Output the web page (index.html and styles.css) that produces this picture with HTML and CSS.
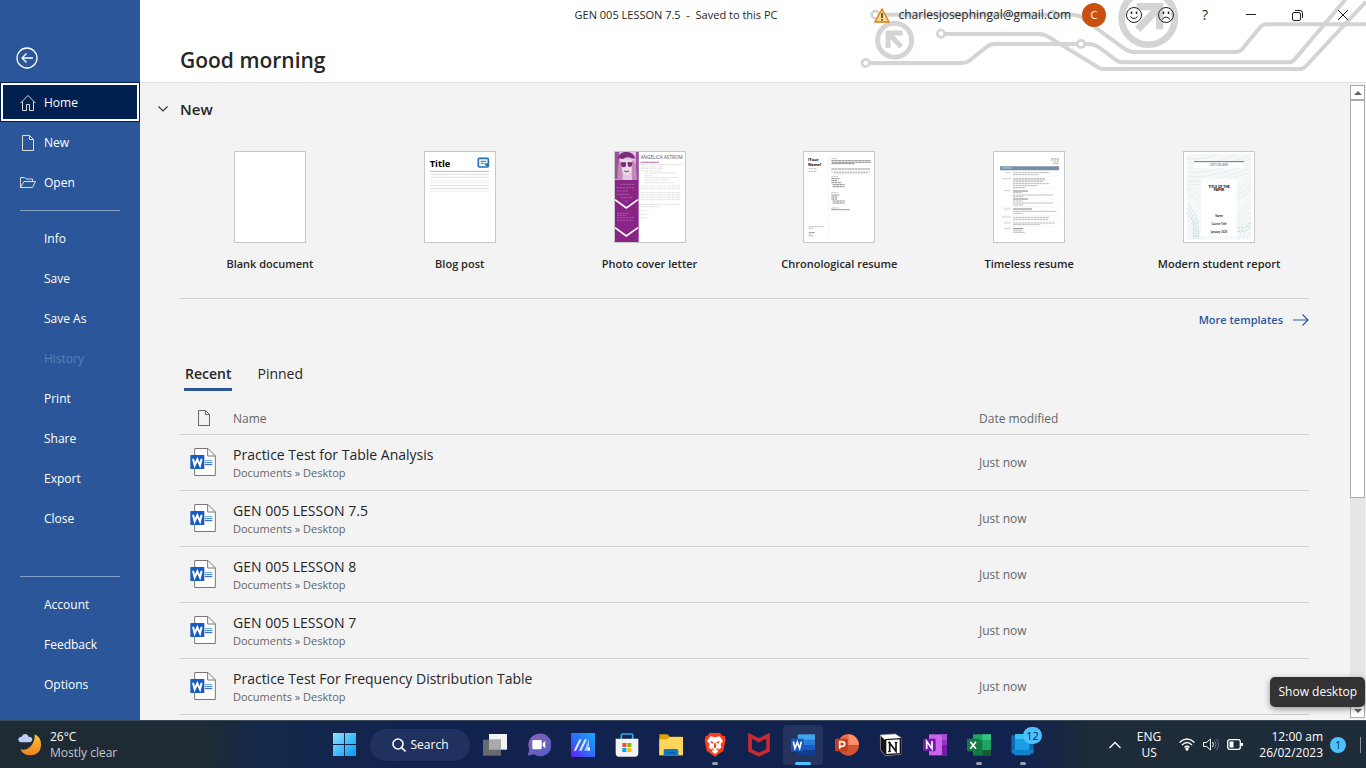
FILE: index.html
```html
<!DOCTYPE html>
<html lang="en">
<head>
<meta charset="utf-8">
<title>GEN 005 LESSON 7.5 - Word</title>
<link rel="stylesheet" href="styles.css">
</head>
<body>
<svg class="defs" aria-hidden="true">
  <symbol id="page" viewBox="0 0 14 18"><path d="M1.5 1.5h7l4 4v11h-11zM8.500 1.500v4h4" fill="none" stroke="currentColor"/></symbol>
  <symbol id="wordfile" viewBox="0 0 78 84">
    <path d="M14 1.500h40l22 22v59H14z" fill="#fff" stroke="#777" stroke-width="3"/>
    <path d="M53 2v22h23" fill="none" stroke="#777" stroke-width="3"/>
    <path d="M45 38h22" stroke="#41a5ee" stroke-width="3"/><path d="M45 44h22" stroke="#2b7cd3" stroke-width="3"/><path d="M45 50h22" stroke="#185abd" stroke-width="3"/>
    <rect x="1" y="21" width="42" height="42" rx="2" fill="#185abd"/>
    <path d="M9 32l5 20 8-18 8 18 5-20" fill="none" stroke="#fff" stroke-width="6"/>
  </symbol>
</svg>
<div class="app">
  <aside class="side">
    <button class="back" aria-label="Back"><svg width="22" height="22" viewBox="0 0 22 22" fill="none" stroke="#fff" stroke-width="1.300"><circle cx="11" cy="11" r="10"/><path d="M17 11H6M10.500 6.500L6 11l4.500 4.500"/></svg></button>
    <nav class="menu">
      <a href="#" class="item active"><svg width="16" height="18" viewBox="0 0 16 18" fill="none" stroke="#ddd"><path d="M.5 9L8 1.500 15.500 9M2.500 7.500v9h4v-6h3v6h4v-9"/></svg>Home</a>
      <a href="#" class="item"><svg width="16" height="18"><use href="#page"/></svg>New</a>
      <a href="#" class="item"><svg width="16" height="18" viewBox="0 0 16 18" fill="none" stroke="#ddd"><path d="M.5 13.500v-10h4l2 1.500h6v2.500M.5 13.500l3.500-6h11.500l-3 6z"/></svg>Open</a>
      <hr>
      <a href="#" class="item">Info</a>
      <a href="#" class="item">Save</a>
      <a href="#" class="item">Save As</a>
      <a href="#" class="item disabled" aria-disabled="true">History</a>
      <a href="#" class="item">Print</a>
      <a href="#" class="item">Share</a>
      <a href="#" class="item">Export</a>
      <a href="#" class="item">Close</a>
    </nav>
    <nav class="menu bottom">
      <hr>
      <a href="#" class="item">Account</a>
      <a href="#" class="item">Feedback</a>
      <a href="#" class="item">Options</a>
    </nav>
  </aside>
  <div class="main">
    <header class="head">
      <svg class="circuit" width="516" height="82" viewBox="0 0 1548 246" fill="none" stroke="#d4d4d4" stroke-width="12" aria-hidden="true">
        <circle cx="76" cy="44" r="11" stroke-width="8"/><path d="M88 44H596"/><circle cx="608" cy="44" r="11" stroke-width="8"/><path d="M620 44H670Q690 45 706 60L825 147Q838 156 850 156H1160Q1168 156 1176 148L1230 82Q1238 73 1250 73H1548"/>
        <circle cx="273" cy="101" r="11" stroke-width="8"/><path d="M285 102H568Q582 102 598 112L735 196Q750 207 760 207H1350Q1360 207 1368 198L1548 5"/>
        <circle cx="47" cy="189" r="11" stroke-width="8"/><path d="M59 189H338Q350 189 361 180L407 143Q420 132 434 132H681"/><circle cx="693" cy="132" r="11" stroke-width="8"/><path d="M705 132H720Q735 133 750 144L796 179Q806 187 818 187H1316Q1326 187 1334 178L1490 -6"/>
        <circle cx="134" cy="121" r="51" stroke-width="15"/><path d="M114 144V99H158M116 101L154 140" stroke-width="15"/>
        <circle cx="895" cy="54" r="80" stroke-width="20"/><path d="M860 20H929V88M927 22L863 88" stroke-width="22"/>
      </svg>
      <div class="titlebar">
        <span class="doc">GEN 005 LESSON 7.5&nbsp; -&nbsp; Saved to this PC</span>
        <svg width="16" height="15" viewBox="0 0 16 15"><path d="M8 1l7 13H1z" fill="#fbdc8d" stroke="#e07b16" stroke-width="1.300"/><path d="M8 5v5M8 11v1.500" stroke="#333" stroke-width="1.500"/></svg>
        <button class="mail">charlesjosephingal@gmail.com</button>
        <button class="avatar" aria-label="Account">C</button>
        <button class="face" aria-label="Send a smile"><svg width="16" height="16" viewBox="0 0 16 16" fill="none" stroke="#222"><circle cx="8" cy="8" r="7.500"/><path d="M4.500 9.500q3.500 4 7 0"/><path d="M5.500 4.500v2.500M10.500 4.500v2.500" stroke-width="1.500"/></svg></button>
        <button class="face" aria-label="Send a frown"><svg width="16" height="16" viewBox="0 0 16 16" fill="none" stroke="#222"><circle cx="8" cy="8" r="7.500"/><path d="M4 12.500q4-5 8 0"/><path d="M5.500 4.500v2.500M10.500 4.500v2.500" stroke-width="1.500"/></svg></button>
        <button class="win" aria-label="Help">?</button>
        <button class="win" aria-label="Minimize"><svg width="10" height="10"><path d="M0 4.500h10" stroke="#222"/></svg></button>
        <button class="win" aria-label="Restore"><svg width="11" height="11" viewBox="0 0 11 11" fill="none" stroke="#222"><rect x=".5" y="2.500" width="8" height="8" rx="1.500"/><path d="M3 .5h5q2.500 0 2.500 2.500v5"/></svg></button>
        <button class="win" aria-label="Close"><svg width="10" height="10" viewBox="0 0 10 10"><path d="M0 0l10 10M10 0L0 10" stroke="#222"/></svg></button>
      </div>
      <h1>Good morning</h1>
    </header>
    <div class="body">
      <main class="content">
        <h2><button class="fold" aria-label="Collapse New"><svg width="10" height="6" viewBox="0 0 10 6" fill="none" stroke="#333" stroke-width="1.200"><path d="M.5.5L5 5 9.500.5"/></svg></button>New</h2>
        <div class="templates">
          <button class="tpl"><span class="thumb"></span>Blank document</button>
          <button class="tpl"><span class="thumb"><svg viewBox="0 0 210 270"><text x="14" y="46" class="t-title">Title</text><rect x="160" y="19" width="30" height="26" rx="3" fill="#fff" stroke="#2372ba" stroke-width="5"/><path d="M167 28h16M167 34h9" stroke="#2372ba" stroke-width="3"/><path d="M177 34h13v8h-7z" fill="#2372ba"/><path d="M15 58h177" stroke="#bbb" stroke-width="3"/><path d="M15 67h177M15 76h177M15 101h177M15 110h177" stroke="#dedede" stroke-width="3"/><path d="M15 86h177M15 92h177M15 118h177" stroke="#eee" stroke-width="3"/></svg></span>Blog post</button>
          <button class="tpl"><span class="thumb"><svg viewBox="0 0 210 270"><path fill="#8a2487" d="M0 0h71v270H0z"/><path fill="#e3c9df" d="M0 0h71v84H0z"/><path fill="#9b519b" d="M0 0h13v22l-5 60H0zM63 0h8v84H60z"/><path fill="#c28abb" d="M12 28q-6 28-4 56h15V35zM49 30l2 54h15Q64 47 56 24z"/><path fill="#eadae8" d="M20 24h30v29q-5 17-15 17T21 54z"/><path fill="#792d7b" d="M8 18Q16-3 37 0q18 0 24 20l-11-1q-14-8-26 2zM17 31h16v11q-7 8-14 0zM37 31h16l-3 11q-6 6-11 0z"/><path d="M28 57q7 5 14 0" stroke="#792d7b" stroke-width="3" fill="none"/><path fill="none" stroke="#fff" stroke-width="5" d="M0 143l34 25 35-25M0 227l34 25 35-25"/><path stroke="#b67bb4" stroke-width="2" stroke-dasharray="7 2" d="M15 97h43M4 107h52M5 117h34M5 127h40M17 137h38M6 184h35M6 190h28M6 197h50M6 205h47M30 147h8"/><text x="77" y="22" class="t-name">ANGELICA ASTROM</text><path d="M77 31h55" stroke="#b86fb4" stroke-width="4" stroke-dasharray="5 1"/><path stroke="#d2d2d2" stroke-width="2" stroke-dasharray="14 2 8 2" d="M77 38h126M77 45h65M77 50h70M77 57h62M89 63h97M89 71h22M89 77h101M89 84h74M89 92h88M77 102h118M77 109h118M77 122h123M77 129h118M77 136h121M77 143h119M77 157h117M77 164h56M77 176h20M77 187h26M77 197h20"/></svg></span>Photo cover letter</button>
          <button class="tpl"><span class="thumb"><svg viewBox="0 0 210 270"><text x="12" y="28" class="t-your">[Your</text><text x="12" y="41" class="t-your">Name]</text><path d="M74 12v245" stroke="#eee" stroke-width="2"/><path stroke="#999" stroke-width="2" stroke-dasharray="6 2" d="M14 50h25M14 58h25M82 20h18M82 60h116M90 63h100M82 74h20M82 122h20M14 224h49M14 229h15M14 248h10M14 252h17M82 168h22"/><path stroke="#555" stroke-width="2" stroke-dasharray="9 1" d="M82 26h118M84 31h116M82 35h70M82 51h116M14 242h18M82 80h24M82 86h18M82 92h30M86 98h36M86 104h36M82 129h24M82 135h18M82 141h17M86 147h36M86 153h36M82 173h55"/></svg></span>Chronological resume</button>
          <button class="tpl"><span class="thumb"><svg viewBox="0 0 210 270"><path fill="#768fa9" d="M18 43h177v12H18z"/><path d="M22 48h32" stroke="#b6c6d5" stroke-width="3"/><path stroke="#999" stroke-width="2" stroke-dasharray="8 1" d="M171 20h24M169 24h26M178 30h17M176 35h19M57 62h110M57 68h76M57 80h96M57 84h97M57 89h90M57 95h110M57 101h75M57 107h38M57 122h28M57 129h120M57 134h30M57 147h28M57 153h120M57 159h30M57 178h130M57 184h30M57 196h110M57 202h105M57 213h125M57 218h82M57 236h26M57 241h35"/><path stroke="#444" stroke-width="2" d="M57 117h45M57 141h45M57 171h57M57 230h30"/><path stroke="#a8b8c9" stroke-width="2" d="M34 62h15M24 80h27M30 116h20M30 171h20M24 195h27M30 213h20M30 230h20"/><path stroke="#e5e5e5" stroke-width="1" d="M18 74h177M18 110h177M18 165h177M18 190h177M18 207h177M18 224h177"/></svg></span>Timeless resume</button>
          <button class="tpl"><span class="thumb"><svg viewBox="0 0 210 270"><rect x="9" y="6" width="192" height="257" fill="#f5f8f8"/><path fill="none" stroke="#cbdadd" stroke-width="2" stroke-dasharray="4 3" d="M10 20q50 5 90-14M10 34q70 8 150-28M10 48q75 5 190-38M10 60q75 5 190-40M10 74q80 5 190-40M10 88q90 0 190-40M10 100q90-5 190-40M150 116q30-5 50-40M150 130q40-8 50-40M150 144q40-8 50-40M10 110q30 10 45 40M10 124q28 15 45 45M10 190q30 20 35 70M10 204q26 15 28 56M10 218q18 10 20 42M201 156q-30 10-42 40M201 168q-30 10-45 40M201 180q-30 10-45 50M201 196q-30 10-45 55M201 212q-30 10-35 50M201 228q-20 5-22 32M201 240q-10 5-12 20"/><path fill="none" stroke="#a3c7cd" stroke-width="2" stroke-dasharray="5 3" d="M10 155q40 40 32 105M10 170q32 32 25 90M10 182q25 24 18 78M155 225q35 10 45-15M155 235q35 10 45-15"/><path fill="#fff" d="M30 27h150v22H30zM51 80h108v173H51z"/><path stroke="#517d83" stroke-width="3" d="M30 29h150"/><text x="105" y="43" class="t-small teal">CITY COLLEGE</text><text x="105" y="107" class="t-small strong">TITLE OF THE</text><text x="105" y="118" class="t-small strong">PAPER</text><text x="105" y="196" class="t-small">Name</text><text x="105" y="220" class="t-small">Course Title</text><text x="105" y="243" class="t-small">January 2023</text></svg></span>Modern student report</button>
        </div>
        <div class="more"><a href="#">More templates<svg width="16" height="12" viewBox="0 0 16 12" fill="none" stroke="#2b579a" stroke-width="1.200"><path d="M0 6h15M9.500.5L15 6l-5.500 5.500"/></svg></a></div>
        <div class="tabs" role="tablist"><button role="tab" aria-selected="true" class="on">Recent</button><button role="tab" aria-selected="false">Pinned</button></div>
        <table class="recent">
          <thead><tr><th class="ic"><svg width="14" height="18" aria-label="Type"><use href="#page"/></svg></th><th>Name</th><th class="date">Date modified</th></tr></thead>
          <tbody>
            <tr><td class="ic"><svg width="26" height="28"><use href="#wordfile"/></svg></td><td><a href="#">Practice Test for Table Analysis</a><small>Documents » Desktop</small></td><td class="date">Just now</td></tr>
            <tr><td class="ic"><svg width="26" height="28"><use href="#wordfile"/></svg></td><td><a href="#">GEN 005 LESSON 7.5</a><small>Documents » Desktop</small></td><td class="date">Just now</td></tr>
            <tr><td class="ic"><svg width="26" height="28"><use href="#wordfile"/></svg></td><td><a href="#">GEN 005 LESSON 8</a><small>Documents » Desktop</small></td><td class="date">Just now</td></tr>
            <tr><td class="ic"><svg width="26" height="28"><use href="#wordfile"/></svg></td><td><a href="#">GEN 005 LESSON 7</a><small>Documents » Desktop</small></td><td class="date">Just now</td></tr>
            <tr><td class="ic"><svg width="26" height="28"><use href="#wordfile"/></svg></td><td><a href="#">Practice Test For Frequency Distribution Table</a><small>Documents » Desktop</small></td><td class="date">Just now</td></tr>
          </tbody>
        </table>
      </main>
      <div class="scroll">
        <button aria-label="Scroll up"><svg width="8" height="4"><path d="M0 4l4-4 4 4z" fill="#666"/></svg></button>
        <div class="track"><div class="grip"></div></div>
        <button aria-label="Scroll down"><svg width="8" height="4"><path d="M0 0l4 4 4-4z" fill="#666"/></svg></button>
      </div>
    </div>
  </div>
  <div class="tip" role="tooltip">Show desktop</div>
</div>
<footer class="taskbar">
  <button class="weather">
    <svg width="24" height="24" viewBox="0 0 72 72"><defs><linearGradient id="moon" x2="0" y2="1"><stop stop-color="#fbc63a"/><stop offset="1" stop-color="#f0801c"/></linearGradient></defs><path d="M50 4q19 8 19 30 0 32-32 33Q15 67 7 49q20 4 32-10t11-35z" fill="url(#moon)"/><path d="M8 28q-8-2-7-10 2-7 10-7 3-9 11-8 8 0 10 8 10 0 11 8-1 9-9 9z" fill="#bdcff5"/></svg>
    <span>26°C<span class="dim">Mostly clear</span></span>
  </button>
  <div class="dock">
    <button class="start" aria-label="Start"><svg width="23" height="23" viewBox="0 0 23 23"><defs><linearGradient id="wn" x2="1" y2="1"><stop stop-color="#8ee3ff"/><stop offset="1" stop-color="#0098f8"/></linearGradient></defs><path fill="url(#wn)" d="M0 0h11v11H0zM12 0h11v11H12zM0 12h11v11H0zM12 12h11v11H12z"/></svg></button>
    <button class="search"><svg width="14" height="14" viewBox="0 0 14 14" fill="none" stroke="#fff" stroke-width="1.600"><circle cx="6" cy="6" r="5"/><path d="M9.500 9.500L13.500 13.500"/></svg>Search</button>
    <button class="ap" aria-label="Task view"><svg viewBox="0 0 72 72"><path d="M18 3h54v47H18z" fill="#f2f2f2"/><path d="M0 20h54v48H0z" fill="#777" opacity=".85"/><path d="M18 20h36v30H18z" fill="#aaa"/></svg></button>
    <button class="ap" aria-label="Chat"><svg viewBox="0 0 72 72"><defs><linearGradient id="ch" x2="1" y2="1"><stop stop-color="#8d68b0"/><stop offset="1" stop-color="#5059c9"/></linearGradient></defs><path d="M36 2a34 34 0 1 1-15 62L2 68l5-18A34 34 0 0 1 36 2z" fill="url(#ch)"/><rect x="16" y="21" width="28" height="28" rx="4" fill="#fff"/><path d="M47 31l8-7v22l-8-7z" fill="#fff"/></svg></button>
    <button class="ap" aria-label="MyASUS"><svg viewBox="0 0 72 72"><defs><linearGradient id="as" x1="1" x2="0" y2="1"><stop stop-color="#12abf8"/><stop offset=".6" stop-color="#3464fa"/><stop offset="1" stop-color="#6718f5"/></linearGradient></defs><path fill="url(#as)" d="M0 0h72v72H0z"/><path d="M8 53l17-34h7L15 53zM24 53l17-34h7L31 53z" fill="#dceaff"/><path d="M40 53l14-34v18l-7 16z" fill="#a8c8ff"/><path d="M49 43h8v10h-8z" fill="#fff"/></svg></button>
    <button class="ap" aria-label="Microsoft Store"><svg viewBox="0 0 72 72"><path d="M19 20V6q0-3 3-3h28q3 0 3 3v14" fill="none" stroke="#2bb1e8" stroke-width="5"/><path d="M2 17h68v42q0 12-10 12H12Q2 71 2 59z" fill="#f2f3f5"/><path d="M22 30h12v12H22z" fill="#f25022"/><path d="M37 30h12v12H37z" fill="#7fba00"/><path d="M22 45h12v12H22z" fill="#00a4ef"/><path d="M37 45h12v12H37z" fill="#ffb900"/></svg></button>
    <button class="ap" aria-label="File Explorer"><svg viewBox="0 0 72 72"><path d="M1 7q0-3 3-3h22l6 7h37q3 0 3 4v52H1z" fill="#dfa10a"/><path d="M1 19h22l8-7h41v55H1z" fill="#ffd65b"/><path d="M14 67V53q0-5 5-5h34q5 0 5 5v14z" fill="#0f78c4"/><path d="M24 59h24" stroke="#075b9c" stroke-width="4"/></svg></button>
    <button class="ap run" aria-label="Brave"><svg viewBox="0 0 72 72"><path d="M19 0h32l7 8 8 1 2 13-7 31-25 18-25-18L5 22l3-13 6-1z" fill="#f9401c"/><path d="M22 10l14 3 14-3 10 14-7 9 2 11-12 7 2 5-9 7-9-7 2-5-12-7 3-11-8-9z" fill="#fff"/><path d="M20 24l12 3-4 6zM52 24l-12 3 4 6zM34 29h4l2 13-4 4-4-4zM24 43l9 6-3 3zM48 43l-9 6 3 3z" fill="#f9401c"/></svg></button>
    <button class="ap" aria-label="McAfee"><svg viewBox="0 0 72 72"><path d="M9 8l27 14L63 8v44L36 65 9 52z" fill="none" stroke="#c62b30" stroke-width="11"/></svg></button>
    <button class="ap cur" aria-label="Word"><svg viewBox="0 0 72 72"><path d="M20 4h52v17H20z" fill="#41a5ee"/><path d="M20 20h52v16H20z" fill="#2b7cd3"/><path d="M20 36h52v16H20z" fill="#185abd"/><path d="M20 51h52v16H20z" fill="#103f91"/><rect y="17" width="38" height="38" rx="3" fill="#185abd"/><path d="M7 26l5 20 7-18 7 18 5-20" fill="none" stroke="#fff" stroke-width="5"/></svg></button>
    <button class="ap" aria-label="PowerPoint"><svg viewBox="0 0 72 72"><circle cx="40" cy="36" r="32" fill="#d35230"/><path d="M40 4a32 32 0 0 1 32 32H40z" fill="#ff8f6b"/><path d="M40 4v32H8A32 32 0 0 1 40 4z" fill="#ed6c47"/><rect y="17" width="38" height="38" rx="3" fill="#c43e1c"/><path d="M14 47V26h7q8 0 8 7t-8 7h-7" fill="none" stroke="#fff" stroke-width="5"/></svg></button>
    <button class="ap" aria-label="Notion"><svg viewBox="0 0 72 72"><path d="M4 6l45-3 17 11v50l-47 4L5 51z" fill="#fff" stroke="#aaa" stroke-width="2"/><path d="M5 8l13 13v45L5 50z" fill="#151515"/><path d="M20 20l44-3v45l-44 3z" fill="#fff" stroke="#151515" stroke-width="4"/><path d="M32 55V30l19 25V28" fill="none" stroke="#151515" stroke-width="5"/><path d="M27 29h8M47 28h9M27 56h9" stroke="#151515" stroke-width="3"/></svg></button>
    <button class="ap" aria-label="OneNote"><svg viewBox="0 0 72 72"><path d="M18 4h54v63H18z" fill="#ca64ea"/><path d="M57 4h15v16H57z" fill="#ae4bd5"/><path d="M57 20h15v16H57z" fill="#9332bf"/><path d="M57 36h15v31H57z" fill="#7719aa"/><rect y="17" width="38" height="38" rx="3" fill="#7719aa"/><path d="M11 48V25l16 22V24" fill="none" stroke="#fff" stroke-width="5"/></svg></button>
    <button class="ap run" aria-label="Excel"><svg viewBox="0 0 72 72"><path d="M18 4h54v63H18z" fill="#21a366"/><path d="M46 4h26v17H46z" fill="#33c481"/><path d="M18 21h28v46H18z" fill="#107c41"/><path d="M46 51h26v16H46z" fill="#185c37"/><rect y="17" width="38" height="38" rx="3" fill="#107c41"/><path d="M10 26l17 21M27 26L10 47" stroke="#fff" stroke-width="5"/></svg></button>
    <button class="ap run" aria-label="Phone notifications, 12 new"><svg viewBox="0 0 72 72"><path d="M1 7h16v55H1zM55 26h13v36H55z" fill="#0b67b3"/><path d="M12 3h44v50H12z" fill="#18a0e6"/><path d="M12 3h44v15H12z" fill="#37c1f2"/><path d="M1 50h69l-14 17H12z" fill="#1081ca"/></svg><span class="badge">12</span></button>
  </div>
  <div class="tray">
    <button aria-label="Show hidden icons"><svg width="12" height="8" viewBox="0 0 12 8" fill="none" stroke="#fff" stroke-width="1.300"><path d="M.5 7L6 1.500 11.500 7"/></svg></button>
    <button class="lang">ENG<br>US</button>
    <button class="net" aria-label="Network, volume and battery">
      <svg width="16" height="13" viewBox="0 0 16 13" fill="none" stroke="#fff" stroke-width="1.300"><path d="M.5 4.500q7.500-7 15 0M3 7q5-5 10 0M5.500 9.500q2.500-2.500 5 0"/><circle cx="8" cy="11" r="1" fill="#fff"/></svg>
      <svg width="16" height="13" viewBox="0 0 16 13" fill="none" stroke="#fff"><path d="M.5 4.500h3l4-3.500v11l-4-3.500h-3zM9.500 4q2 2.500 0 5"/><path d="M11.500 2.500q3 4 0 8M13.500 1q4 5.500 0 11" stroke="#6b757e"/></svg>
      <svg width="16" height="11" viewBox="0 0 16 11"><rect x=".7" y=".7" width="12.600" height="9.600" rx="2" fill="none" stroke="#fff" stroke-width="1.300"/><path d="M2.500 2.500h4v6h-4zM14 4h2v3h-2z" fill="#fff"/></svg>
    </button>
    <button class="clock">12:00 am<br>26/02/2023</button>
    <span class="count">1</span>
    <button class="peek" aria-label="Show desktop"></button>
  </div>
</footer>
</body>
</html>
```
FILE: styles.css
```css
* { box-sizing: border-box; }
body { margin: 0; height: 100vh; display: flex; flex-direction: column; overflow: hidden; font: 12px/16px "Open Sans", sans-serif; color: #262626; background: #f3f3f3; }
button { font: inherit; color: inherit; background: none; border: 0; padding: 0; }
a { color: inherit; text-decoration: none; }
.defs { display: none; }
svg { flex: none; }
.app { flex: 1; min-height: 0; display: flex; position: relative; }

/* Sidebar */
.side { width: 140px; flex: none; background: #2b579a; color: #fff; display: flex; flex-direction: column; padding-bottom: 16px; }
.back { display: flex; height: 82px; padding: 47px 0 0 16px; }
.menu { display: flex; flex-direction: column; }
.bottom { margin-top: auto; }
.item { height: 40px; display: flex; align-items: center; gap: 8px; padding: 2px 0 0 44px; color: #fff; }
.item svg { margin-left: -24px; color: #ddd; }
.active { background: #002050; box-shadow: inset 0 0 0 1px #002050, inset 0 0 0 3px #fff; }
.disabled { color: #5c7fb3; }
hr { width: 100px; margin: 8px 20px 7px; border: 0; border-top: 1px solid #84a3c8; }

/* Header */
.main { flex: 1; min-width: 0; display: flex; flex-direction: column; }
.head { height: 83px; flex: none; background: #fff; border-bottom: 1px solid #e1e1e1; position: relative; }
.circuit { position: absolute; right: 0; top: 0; }
.titlebar { position: relative; display: flex; align-items: center; height: 30px; }
.doc { margin: 0 97px 0 auto; font-size: 11px; }
.mail { margin: 0 11px 0 8px; }
.avatar { width: 24px; height: 24px; border-radius: 50%; background: #ca5010; color: #fff; font-size: 11px; margin-right: 12px; }
.face { width: 32px; height: 30px; display: grid; place-items: center; }
.win { width: 46px; height: 30px; display: grid; place-items: center; font-size: 14px; }
h1 { margin: 16px 0 0 40px; font-size: 21px; line-height: 28px; font-weight: 600; }

/* Content */
.body { flex: 1; min-height: 0; display: flex; }
.content { flex: 1; min-width: 0; overflow: hidden; padding: 0 40px; }
h2 { display: flex; align-items: center; margin: 15px 0 0 -22px; font-size: 15px; line-height: 22px; font-weight: 600; }
.fold { display: flex; margin-right: 12px; }
.templates { display: grid; grid-template-columns: repeat(6, 1fr); margin: 31px -5px 0; padding-bottom: 26px; }
.tpl { display: flex; flex-direction: column; align-items: center; gap: 13px; font-weight: 600; font-size: 11px; }
.thumb { display: block; width: 72px; height: 92px; border: 1px solid #c8c8c8; background: #fff; }
.thumb svg { display: block; width: 70px; height: 90px; }
.t-title { font-size: 28px; font-weight: 700; }
.t-name { font-size: 14px; font-weight: 400; fill: #555; }
.t-your { font-size: 12px; font-weight: 700; }
.t-small { font-size: 8px; text-anchor: middle; }
.strong { font-weight: 700; font-size: 10px; }
.teal { fill: #466; }
.more { display: flex; justify-content: flex-end; border-top: 1px solid #d0d0d0; padding-top: 13px; }
.more a { display: flex; align-items: center; gap: 10px; font-weight: 600; font-size: 11px; color: #2b579a; }
.tabs { display: flex; gap: 24px; margin: 36px 0 0 4px; }
.tabs button { font-size: 14px; line-height: 20px; padding: 0 1px 4px; border-bottom: 3px solid transparent; }
.tabs .on { font-weight: 600; border-color: #2b579a; }
.recent { width: 100%; border-collapse: collapse; table-layout: fixed; margin-top: 11px; }
.recent th, .recent td { padding: 2px 0 0; text-align: left; font-weight: 400; color: #666; border-bottom: 1px solid #d0d0d0; }
.recent th { height: 32px; }
.recent td { height: 56px; }
.recent .ic { width: 53px; padding: 0 0 0 10px; }
.recent th.ic { padding-left: 17px; }
.recent .ic svg { display: block; }
.recent .date { width: 330px; }
.recent a { display: block; color: #262626; font-size: 14px; line-height: 20px; }
.recent small { display: block; font-size: 11px; line-height: 16px; }

/* Scrollbar */
.scroll { width: 17px; flex: none; display: flex; flex-direction: column; padding: 2px 1px; background: #f3f3f3; }
.scroll button { height: 15px; background: #fff; border: 1px solid #ababab; display: grid; place-items: center; }
.track { flex: 1; background: #e6e6e6; }
.grip { height: 66%; background: #fff; border: 1px solid #ababab; }
.tip { position: absolute; right: 1px; bottom: 13px; padding: 7px 8px; border-radius: 5px; background: #333; color: #fff; box-shadow: 0 2px 6px #0006; }

/* Taskbar */
.taskbar { height: 48px; flex: none; display: grid; grid-template-columns: 1fr auto 1fr; padding-left: 3px; color: #fff; border-top: 1px solid #3c4b59; background: linear-gradient(90deg, #1e2b35 0%, #1e2b35 15%, #142949 19%, #12224f 30%, #12224f 75%, #1e2b38 80%, #1e2b38 100%); }
.weather { display: flex; align-items: center; gap: 8px; padding-left: 15px; text-align: left; }
.dim { display: block; color: #c3c8cc; }
.dock { display: flex; align-items: center; }
.start { width: 40px; height: 40px; display: grid; place-items: center; }
.search { width: 100px; height: 32px; margin: 0 3px 0 6px; border-radius: 16px; background: #21315f; display: flex; align-items: center; justify-content: center; gap: 5px; }
.ap { width: 40px; height: 40px; margin: 0 2px; display: grid; place-items: center; position: relative; border-radius: 4px; }
.ap svg { width: 24px; height: 24px; }
.cur { background: #25345f; }
.run::after, .cur::after { content: ""; position: absolute; bottom: 0; left: 17px; width: 6px; height: 3px; border-radius: 2px; background: #9aa0ad; }
.cur::after { left: 12px; width: 16px; background: #4cc2ff; }
.badge { position: absolute; right: 1px; top: 2px; width: 19px; height: 17px; border-radius: 9px; background: #4cc2ff; color: #0b2740; font-size: 11px; line-height: 17px; text-align: center; }
.tray { display: flex; align-items: center; justify-content: flex-end; }
.lang { margin: 0 18px 0 16px; }
.net { display: flex; align-items: center; gap: 8px; margin-right: 16px; }
.clock { text-align: right; margin-right: 7px; }
.count { width: 16px; height: 16px; border-radius: 50%; background: #4cc2ff; color: #0b2740; font-size: 10px; text-align: center; margin-right: 14px; }
.peek { width: 6px; height: 16px; border-left: 1px solid #8b949c; }
```
